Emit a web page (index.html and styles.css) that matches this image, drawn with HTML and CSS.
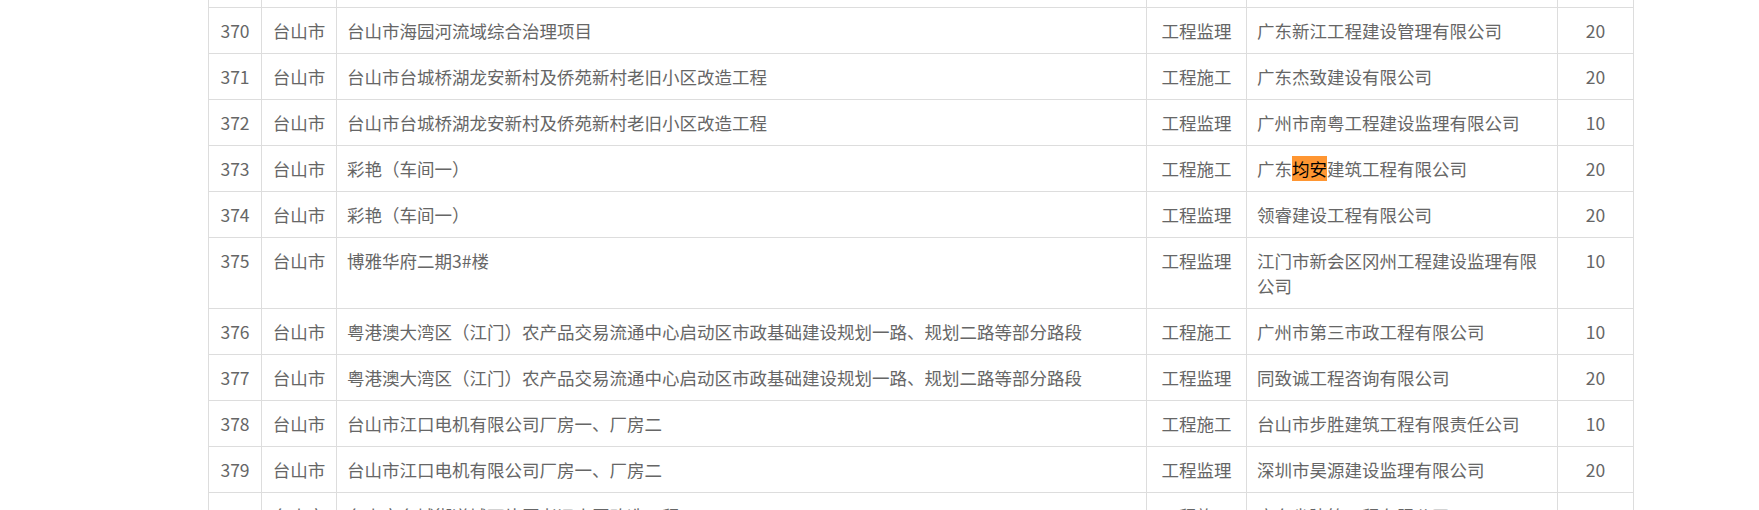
FILE: index.html
```html
<!DOCTYPE html>
<html lang="zh-CN">
<head>
<meta charset="utf-8">
<title>项目列表</title>
<link rel="stylesheet" href="styles.css">
</head>
<body>
<div class="page">
  <table class="list">
    <colgroup>
      <col class="c-no"><col class="c-city"><col class="c-proj"><col class="c-type"><col class="c-comp"><col class="c-score">
    </colgroup>
    <tbody>
      <tr><td class="ctr">369</td><td class="ctr">台山市</td><td>台山市海园河流域综合治理项目</td><td class="ctr">工程施工</td><td>广东省水电工程有限公司</td><td class="ctr">20</td></tr>
      <tr><td class="ctr">370</td><td class="ctr">台山市</td><td>台山市海园河流域综合治理项目</td><td class="ctr">工程监理</td><td>广东新江工程建设管理有限公司</td><td class="ctr">20</td></tr>
      <tr><td class="ctr">371</td><td class="ctr">台山市</td><td>台山市台城桥湖龙安新村及侨苑新村老旧小区改造工程</td><td class="ctr">工程施工</td><td>广东杰致建设有限公司</td><td class="ctr">20</td></tr>
      <tr><td class="ctr">372</td><td class="ctr">台山市</td><td>台山市台城桥湖龙安新村及侨苑新村老旧小区改造工程</td><td class="ctr">工程监理</td><td>广州市南粤工程建设监理有限公司</td><td class="ctr">10</td></tr>
      <tr><td class="ctr">373</td><td class="ctr">台山市</td><td>彩艳（车间一）</td><td class="ctr">工程施工</td><td>广东<mark class="hit">均安</mark>建筑工程有限公司</td><td class="ctr">20</td></tr>
      <tr><td class="ctr">374</td><td class="ctr">台山市</td><td>彩艳（车间一）</td><td class="ctr">工程监理</td><td>领睿建设工程有限公司</td><td class="ctr">20</td></tr>
      <tr><td class="ctr">375</td><td class="ctr">台山市</td><td>博雅华府二期3#楼</td><td class="ctr">工程监理</td><td>江门市新会区冈州工程建设监理有限公司</td><td class="ctr">10</td></tr>
      <tr><td class="ctr">376</td><td class="ctr">台山市</td><td>粤港澳大湾区（江门）农产品交易流通中心启动区市政基础建设规划一路、规划二路等部分路段</td><td class="ctr">工程施工</td><td>广州市第三市政工程有限公司</td><td class="ctr">10</td></tr>
      <tr><td class="ctr">377</td><td class="ctr">台山市</td><td>粤港澳大湾区（江门）农产品交易流通中心启动区市政基础建设规划一路、规划二路等部分路段</td><td class="ctr">工程监理</td><td>同致诚工程咨询有限公司</td><td class="ctr">20</td></tr>
      <tr><td class="ctr">378</td><td class="ctr">台山市</td><td>台山市江口电机有限公司厂房一、厂房二</td><td class="ctr">工程施工</td><td>台山市步胜建筑工程有限责任公司</td><td class="ctr">10</td></tr>
      <tr><td class="ctr">379</td><td class="ctr">台山市</td><td>台山市江口电机有限公司厂房一、厂房二</td><td class="ctr">工程监理</td><td>深圳市昊源建设监理有限公司</td><td class="ctr">20</td></tr>
      <tr><td class="ctr">380</td><td class="ctr">台山市</td><td>台山市台城街道城西片区老旧小区改造工程</td><td class="ctr">工程施工</td><td>广东省建筑工程有限公司</td><td class="ctr">20</td></tr>
    </tbody>
  </table>
</div>
</body>
</html>
```
FILE: styles.css
```css
html, body {
  margin: 0;
  padding: 0;
  background: #fff;
}
body {
  font-family: "Noto Sans CJK SC", "Noto Sans", sans-serif;
  font-size: 17.5px;
  color: #666;
  overflow: hidden;
}
.page {
  margin-top: -39px;
  padding-left: 208px;
}
.list {
  border-collapse: collapse;
  table-layout: fixed;
  width: 1425px;
}
.c-no { width: 53px; }
.c-city { width: 75px; }
.c-proj { width: 810px; }
.c-type { width: 100px; }
.c-comp { width: 311px; }
.c-score { width: 76px; }
.list td {
  border: 1px solid #ddd;
  padding: 10px 10px;
  line-height: 25px;
  vertical-align: top;
  text-align: left;
  word-break: break-all;
}
.list td.ctr {
  text-align: center;
  padding-left: 4px;
  padding-right: 4px;
}
.hit {
  background: #ff9632;
  color: #000;
}
```
